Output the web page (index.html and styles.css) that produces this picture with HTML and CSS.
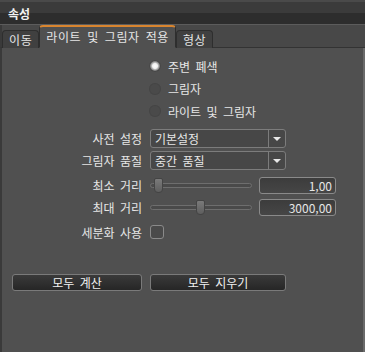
FILE: index.html
```html
<!DOCTYPE html>
<html lang="ko">
<head>
<meta charset="utf-8">
<link rel="stylesheet" href="styles.css">
</head>
<body>
<div class="panel">
  <div class="titlebar"><span class="title">속성</span></div>
  <div class="tabstrip">
    <div class="tab">이동</div>
    <div class="tab active">라이트 및 그림자 적용</div>
    <div class="tab">형상</div>
  </div>
  <div class="content">
    <div class="radios">
      <div class="radio-row"><span class="radio on"></span><span>주변 폐색</span></div>
      <div class="radio-row"><span class="radio"></span><span>그림자</span></div>
      <div class="radio-row"><span class="radio"></span><span>라이트 및 그림자</span></div>
    </div>
    <div class="form">
      <div class="label">사전 설정</div>
      <div class="select"><span class="sel-text">기본설정</span><span class="sel-arrow"></span></div>
      <div class="label">그림자 품질</div>
      <div class="select"><span class="sel-text">중간 품질</span><span class="sel-arrow"></span></div>
      <div class="label first-slider">최소 거리</div>
      <div class="slider-row first-slider">
        <div class="slider"><div class="track"></div><div class="knob" style="left: 4px"></div></div>
        <div class="num">1,00</div>
      </div>
      <div class="label">최대 거리</div>
      <div class="slider-row">
        <div class="slider"><div class="track"></div><div class="knob" style="left: 46px"></div></div>
        <div class="num">3000,00</div>
      </div>
      <div class="label check-label">세분화 사용</div>
      <div class="check-cell"><span class="checkbox"></span></div>
    </div>
    <div class="buttons">
      <div class="btn">모두 계산</div>
      <div class="btn second">모두 지우기</div>
    </div>
  </div>
</div>
</body>
</html>
```
FILE: styles.css
```css
html, body {
  margin: 0;
  padding: 0;
  background: #505050;
}
body {
  width: 365px;
  height: 352px;
  overflow: hidden;
  font-family: "Noto Sans CJK KR", "Noto Sans", sans-serif;
  font-size: 12px;
  color: #e6e6e6;
  word-spacing: 2px;
}
.panel {
  width: 365px;
  height: 352px;
  display: flex;
  flex-direction: column;
}
.titlebar {
  height: 22px;
  border-top: 2px solid #4a4a4a;
  background: linear-gradient(#3b3b3b 0, #3b3b3b 11px, #2d2d2d 11px, #2d2d2d 100%);
  display: flex;
  align-items: center;
  padding-left: 8px;
  border-bottom: 1px solid #5c5c5c;
}
.title {
  font-weight: bold;
  font-size: 12px;
  color: #f2f2f2;
}
.tabstrip {
  height: 22px;
  background: #484848;
  display: flex;
  align-items: flex-end;
  padding-left: 2px;
  border-bottom: 1px solid #333333;
  border-left: 2px solid #3a3a3a;
}
.tab {
  height: 17px;
  line-height: 17px;
  padding: 0 6px;
  background: #404040;
  border: 1px solid #2e2e2e;
  border-bottom: none;
  border-radius: 4px 4px 0 0;
  color: #e6e6e6;
  margin-bottom: -1px;
  margin-left: 0;
  letter-spacing: 0.6px;
}
.tab:first-child { margin-left: -2px; }
.tab.active {
  height: 20px;
  line-height: 20px;
  background: #505050;
  border: 1px solid #2e2e2e;
  border-top: 2px solid #d9852f;
  border-bottom: 1px solid #505050;
  position: relative;
  z-index: 1;
}
.content {
  flex: 1;
  background: #505050;
  border-left: 2px solid #3a3a3a;
  border-right: 2px solid #6a6a6a;
  display: flex;
  flex-direction: column;
  padding-top: 7px;
}
.radios {
  display: flex;
  flex-direction: column;
  padding-left: 147px;
}
.radio-row {
  height: 22.5px;
  display: flex;
  align-items: center;
  gap: 7px;
}
.radio {
  width: 12px;
  height: 12px;
  border-radius: 50%;
  background: #4a4a4a;
  box-shadow: inset 0 0 0 1px #464646;
}
.radio.on {
  background: radial-gradient(circle, #ffffff 0, #f0f0f0 2.5px, #9a9a9a 4px, #555555 6px);
}
.form {
  display: grid;
  grid-template-columns: 140px 1fr;
  column-gap: 8px;
  row-gap: 3px;
  margin-top: 6px;
  align-items: center;
}
.label {
  text-align: right;
  height: 19px;
  line-height: 19px;
}
.select {
  width: 134px;
  height: 17px;
  border: 1px solid #7c7c7c;
  border-radius: 3px;
  background: #474747;
  display: flex;
  align-items: center;
}
.sel-text {
  flex: 1;
  padding-left: 4px;
  line-height: 17px;
}
.sel-arrow {
  width: 16px;
  height: 17px;
  border-left: 1px solid #7c7c7c;
  position: relative;
}
.sel-arrow::after {
  content: "";
  position: absolute;
  left: 4px;
  top: 7px;
  border-left: 4px solid transparent;
  border-right: 4px solid transparent;
  border-top: 4px solid #e8e8e8;
}
.first-slider {
  margin-top: 3px;
}
.slider-row {
  display: flex;
  align-items: center;
  gap: 7px;
  height: 19px;
}
.slider {
  width: 102px;
  height: 16px;
  position: relative;
}
.track {
  position: absolute;
  left: 0;
  right: 0;
  top: 6px;
  height: 3px;
  border: 1px solid #6e6e6e;
  border-radius: 3px;
  background: #4a4a4a;
}
.knob {
  position: absolute;
  top: 1px;
  width: 7px;
  height: 13px;
  border-radius: 2px 2px 4px 4px;
  background: linear-gradient(#7a7a7a, #5e5e5e);
  border: 1px solid #444444;
}
.num {
  width: 72px;
  height: 15px;
  line-height: 15px;
  border: 1px solid #8a8a8a;
  border-radius: 3px;
  background: linear-gradient(#3c3c3c, #464646);
  text-align: right;
  padding-right: 3px;
  word-spacing: 0;
}
.check-label {
  margin-top: 3px;
}
.check-cell {
  margin-top: 3px;
  height: 19px;
  display: flex;
  align-items: center;
}
.checkbox {
  width: 12px;
  height: 12px;
  border: 1px solid #8a8a8a;
  border-radius: 3px;
  background: #4a4a4a;
}
.buttons {
  display: flex;
  gap: 8px;
  padding-left: 10px;
  margin-top: 32px;
}
.btn {
  width: 128px;
  height: 15px;
  line-height: 15px;
  text-align: center;
  border: 1px solid #7a7a7a;
  border-radius: 3px;
  background: linear-gradient(#3a3a3a, #262626);
  color: #f0f0f0;
}
.btn.second { width: 134px; }
```
